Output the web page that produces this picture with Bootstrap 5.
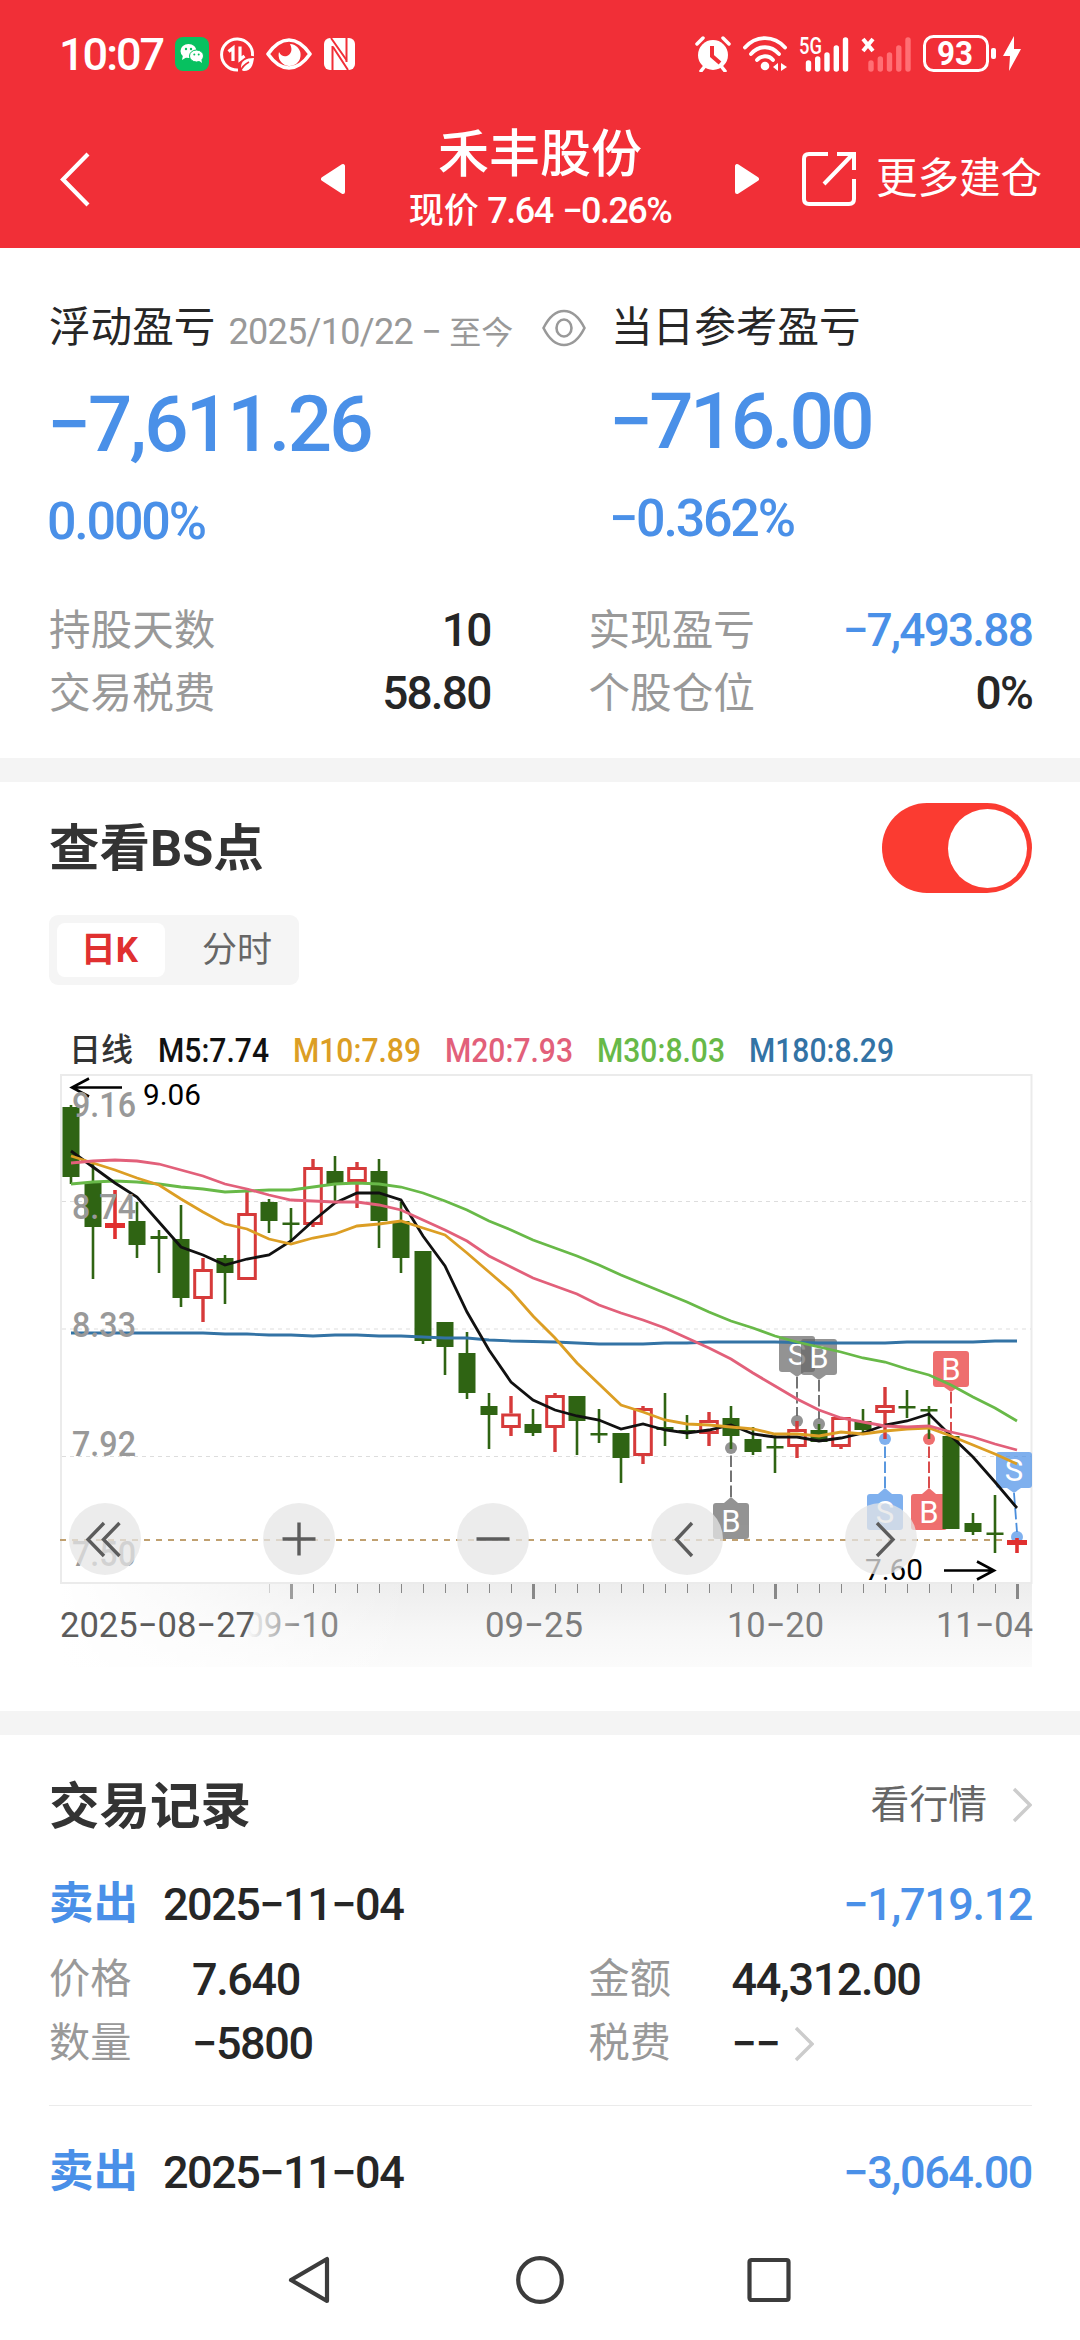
<!DOCTYPE html>
<html lang="zh-CN">
<head>
<meta charset="utf-8">
<meta name="viewport" content="width=device-width, initial-scale=1">
<title>禾丰股份</title>
<link href="https://cdn.jsdelivr.net/npm/bootstrap@5.3.0/dist/css/bootstrap.min.css" rel="stylesheet">
<style>
  :root { --brand: #f12f37; --fall: #4a90e8; --ink: #262626; --soft: #999; }
  body { width: 1080px; height: 2340px; overflow: hidden; background: #fff; color: var(--ink);
         font-family: Roboto, "Noto Sans CJK SC", sans-serif; line-height: 1; }
  svg { display: block; flex: none; }
  .app-head { background: var(--brand); height: 248px; color: #fff; }
  .status-bar { height: 108px; padding: 0 59px 0 59px; }
  .clock { font-size: 45px; font-weight: 500; letter-spacing: -2px; width: 116px; }
  .ic-data, .ic-eye { margin-left: 11px; }
  .ic-nfc, .ic-wifi, .ic-sig { margin-left: 12px; }
  .ic-batt { margin-left: 11px; }
  .title-bar { height: 140px; padding: 2px 36px 0 58px; }
  .prev-arrow { margin-left: 229px; }
  .stock-box { width: 390px; height: 140px; padding-top: 19px; }
  .stock-name { font-size: 51px; font-weight: 500; line-height: 54px; }
  .stock-quote { font-size: 35px; font-weight: 500; line-height: 58px; }
  .stock-quote span { font-size: 36px; letter-spacing: -1.5px; word-spacing: 2px; }
  .ic-out { margin-left: 42px; }
  .more-link { font-size: 41.5px; margin-left: 19px; }
  .fall { color: var(--fall); }
  .soft { color: var(--soft); }
  .pnl { padding: 41px 48px 0 49px; height: 510px; }
  .pnl-left { width: 562px; }
  .h-label { height: 76px; font-size: 41.6px; white-space: nowrap; padding-top: 2px; }
  .h-label .range { font-size: 36px; letter-spacing: -.7px; margin-left: 13px; margin-top: 7px; }
  .h-label .range i { font-style: normal; font-size: 32px; letter-spacing: 0; }
  .ic-show { margin-left: 29px; }
  .big { font-size: 78px; font-weight: 500; letter-spacing: -2.8px; height: 119px; }
  .pct { font-size: 52px; font-weight: 500; letter-spacing: -2.2px; height: 75px; }
  .big, .pct { text-indent: -2px; }
  .pnl-right .big { height: 113px; letter-spacing: -3.6px; }
  .pnl-right .pct { height: 81px; }
  .facts { margin-top: 40px; }
  .facts .fact { height: 63px; font-size: 41.6px; }
  .facts .col-6:first-child { padding-right: 50px; }
  .num { font-size: 46px; font-weight: 500; letter-spacing: -1.8px; }
  .facts .num { margin-top: -2px; }
  .band { height: 24px; background: #f4f4f4; }
  .bs { padding: 21px 48px 0 49px; height: 929px; }
  .sec-title { font-size: 50.5px; font-weight: 700; color: #333; padding-top: 3px; }
  .bs-switch { width: 150px; height: 90px; border-radius: 45px; background: #fb3b31; padding: 6px 5px; }
  .bs-knob { width: 79px; height: 79px; border-radius: 50%; background: #fff; }
  .tabs { width: 250px; height: 70px; border-radius: 9px; background: #f5f5f5; margin-top: 22px; padding: 8px; }
  .tabs div { font-size: 35px; color: #666; padding-top: 1px; }
  .tabs .on { width: 108px; border-radius: 8px; background: #fff; color: #e03030; font-weight: 700; padding-right: 3px; }
  .tabs .off { padding-left: 18px; }
  .chart { margin: 34px 0 0 -49px; }
  .trades { padding: 34px 48px 0 49px; height: 483px; }
  .t-head { height: 73px; }
  .more-quote { font-size: 38.8px; color: #666; }
  .ic-more { margin-left: 25px; }
  .ic-fee { margin-left: 15px; }
  .t-row1 { height: 104px; padding-top: 21px; }
  .side { font-size: 44.5px; font-weight: 700; width: 114px; }
  .t-row1 .num, .t-cells .num { font-size: 45px; letter-spacing: -1.4px; }
  .t-row1 .day { letter-spacing: -1.5px !important; }
  .t-cells { height: 64px; padding-top: 3px; }
  .t-cells .soft { font-size: 41.2px; width: 143px; }
  .t-line { height: 1px; background: #ebebeb; margin-top: 31px; margin-bottom: 4px; }
  .sys-nav { height: 122px; padding-left: 287px; padding-top: 2px; }
  .ic-home { margin-left: 185px; }
  .ic-recent { margin-left: 183px; }
</style>
</head>
<body>
<header class="app-head">
  <div class="status-bar d-flex align-items-center">
    <span class="clock">10:07</span>
    <svg width="34" height="34" viewBox="0 0 34 34"><rect width="34" height="34" rx="8" fill="#07c160"/><g fill="#fff"><ellipse cx="13.500" cy="14" rx="8" ry="7"/><path d="M8 18l-1 5 5-3z"/></g><g fill="#fff" stroke="#07c160"><ellipse cx="21.500" cy="19" rx="7" ry="6"/></g><path d="M23 23l4 3-1-5z" fill="#fff"/><g fill="#07c160"><circle cx="11" cy="12" r="1.200"/><circle cx="16" cy="12" r="1.200"/><circle cx="19.300" cy="17.500" r="1"/><circle cx="23.700" cy="17.500" r="1"/></g></svg>
    <svg class="ic-data" width="35" height="35" viewBox="0 0 35 35" fill="none" stroke="#fff" stroke-width="3"><path d="M32.500 19A15.500 15.500 0 1 0 18 33"/><path d="M8.500 14.500l4.500-3.500v13M20 9.500v13l4.500-3.500" stroke-width="3.200"/><path d="M34 21c-8 0-13 3-13 9 0 2 1 4 3 4 7 0 9-6 10-13z" fill="#fff" stroke="none"/><path d="M20 35c2-5 5-8 9-10" stroke="#f12f37" stroke-width="1.800"/></svg>
    <svg class="ic-eye" width="46" height="34" viewBox="0 0 46 34"><path d="M2 17C9 7 15 3 23 3s14 4 21 14c-7 10-13 14-21 14S9 27 2 17z" fill="none" stroke="#fff" stroke-width="3.600" stroke-linejoin="round"/><path d="M24 7a11 11 0 1 1-11 8c2 4 5 5 8 4 4-2 6-6 3-12z" fill="#fff"/></svg>
    <svg class="ic-nfc" width="31" height="34" viewBox="0 0 31 34"><rect y="1" width="31" height="32" rx="6" fill="#fff"/><path d="M8.500 9v24M22.500 1v24" stroke="#f12f37" stroke-width="2" fill="none"/><path d="M7 1l15.500 22M9 10l15 23" stroke="#f12f37" stroke-width="2" fill="none"/></svg>
    <svg class="ms-auto" width="36" height="36" viewBox="0 0 36 36"><circle cx="18" cy="19" r="15" fill="#fff"/><path d="M2 8l6-6M34 8l-6-6M6 35l4-5M30 35l-4-5" stroke="#fff" stroke-width="3.500" stroke-linecap="round"/><path d="M17 10v10l8 7" fill="none" stroke="#f12f37" stroke-width="4"/></svg>
    <svg class="ic-wifi" width="44" height="36" viewBox="0 0 44 36" fill="none" stroke="#fff" stroke-width="3.800" stroke-linecap="round"><path d="M2 11.500C13-1 31-1 42 11.500M8 18c8-9 20-9 28 0M14 24c4-5 12-5 16 0"/><circle cx="22" cy="30" r="4.300" fill="#fff" stroke="none"/><path d="M30 31l5-4v8zM44 31l-6-4v8z" fill="#fff" stroke="none"/></svg>
    <svg class="ic-sig" width="50" height="48" viewBox="0 -6 50 48"><text x="0" y="17.500" font-size="23" font-weight="500" fill="#fff" textLength="23" lengthAdjust="spacingAndGlyphs">5G</text><path d="M9.500 27v6M18.700 23v10M28 19v14M37.300 12v21M46.500 4v29" stroke="#fff" stroke-width="5.400" stroke-linecap="round"/></svg>
    <svg class="ic-sig" width="51" height="36" viewBox="0 0 51 36"><path d="M2 3l10 12M12 3L2 15" stroke="#fff" stroke-width="4"/><path d="M10 27v6M19.300 23v10M28.500 19v14M37.800 12v21M47 4v29" stroke="#ff6f74" stroke-width="5.400" stroke-linecap="round"/></svg>
    <svg class="ic-batt" width="98" height="38" viewBox="0 0 98 38"><rect x="1.500" y="1.500" width="63" height="34" rx="9" fill="none" stroke="#fff" stroke-width="3"/><text x="14" y="30" font-size="33" font-weight="700" fill="#fff" textLength="36" lengthAdjust="spacingAndGlyphs">93</text><rect x="68" y="13" width="5" height="11" rx="2" fill="#fff"/><path d="M91 1L80 21h7l-1 15 12-22h-7z" fill="#fff"/></svg>
  </div>
  <div class="title-bar d-flex align-items-center">
    <svg width="34" height="56" viewBox="0 0 34 56"><path d="M30 3L5 28.500 30 54" fill="none" stroke="#fff" stroke-width="4.200"/></svg>
    <svg class="prev-arrow" width="24" height="32" viewBox="0 0 24 32"><path d="M22 3v26L2 16z" fill="#fff" stroke="#fff" stroke-width="4" stroke-linejoin="round"/></svg>
    <div class="stock-box text-center">
      <div class="stock-name">禾丰股份</div>
      <div class="stock-quote">现价 <span>7.64 −0.26%</span></div>
    </div>
    <svg width="24" height="32" viewBox="0 0 24 32"><path d="M2 3v26l20-13z" fill="#fff" stroke="#fff" stroke-width="4" stroke-linejoin="round"/></svg>
    <svg class="ic-out" width="56" height="56" viewBox="0 0 56 56" fill="none" stroke="#fff" stroke-width="4"><path d="M27 3H8q-5 0-5 5v40q0 5 5 5h40q5 0 5-5V28M23 33L51 4M36 3h17v16"/></svg>
    <div class="more-link text-nowrap">更多建仓</div>
  </div>
</header>

<main>
<section class="pnl">
  <div class="d-flex">
    <div class="pnl-left flex-shrink-0">
      <div class="h-label d-flex align-items-center">浮动盈亏<span class="range soft">2025/10/22 − <i>至今</i></span>
        <svg class="ic-show" width="44" height="38" viewBox="0 0 44 38" fill="none" stroke="#999" stroke-width="2.600"><path d="M1.500 19C7 8 14 2 22 2s15 6 20.500 17C37 30 30 36 22 36S7 30 1.500 19z"/><ellipse cx="22" cy="19" rx="7.500" ry="8.500"/></svg>
      </div>
      <div class="big fall d-flex align-items-center">−7,611.26</div>
      <div class="pct fall d-flex align-items-center">0.000%</div>
    </div>
    <div class="pnl-right">
      <div class="h-label d-flex align-items-center">当日参考盈亏</div>
      <div class="big fall d-flex align-items-center">−716.00</div>
      <div class="pct fall d-flex align-items-center">−0.362%</div>
    </div>
  </div>
  <div class="facts row gx-0">
    <div class="col-6">
      <div class="fact d-flex justify-content-between align-items-center"><span class="soft">持股天数</span><span class="num">10</span></div>
      <div class="fact d-flex justify-content-between align-items-center"><span class="soft">交易税费</span><span class="num">58.80</span></div>
    </div>
    <div class="col-6 ps-5">
      <div class="fact d-flex justify-content-between align-items-center"><span class="soft">实现盈亏</span><span class="num fall">−7,493.88</span></div>
      <div class="fact d-flex justify-content-between align-items-center"><span class="soft">个股仓位</span><span class="num">0%</span></div>
    </div>
  </div>
</section>
<div class="band"></div>

<section class="bs">
  <div class="d-flex justify-content-between align-items-center">
    <div class="sec-title">查看BS点</div>
    <div class="bs-switch d-flex justify-content-end"><div class="bs-knob"></div></div>
  </div>
  <div class="tabs d-flex">
    <div class="on d-flex align-items-center justify-content-center">日K</div>
    <div class="off flex-grow-1 d-flex align-items-center justify-content-center">分时</div>
  </div>
  <svg class="chart" id="kline" width="1080" height="650" viewBox="0 1020 1080 650"></svg>
</section>
<div class="band"></div>

<section class="trades">
  <div class="t-head d-flex justify-content-between align-items-center">
    <div class="sec-title">交易记录</div>
    <div class="more-quote d-flex align-items-center">看行情
      <svg class="ic-more" width="20" height="36" viewBox="0 0 20 36"><path d="M2 2l16 16L2 34" fill="none" stroke="#ccc" stroke-width="3.400"/></svg>
    </div>
  </div>
  <div class="t-row1 d-flex align-items-center">
    <span class="side fall">卖出</span><span class="num day">2025−11−04</span><span class="num fall ms-auto">−1,719.12</span>
  </div>
  <div class="row gx-0">
    <div class="col-6">
      <div class="t-cells d-flex align-items-center"><span class="soft">价格</span><span class="num">7.640</span></div>
      <div class="t-cells d-flex align-items-center"><span class="soft">数量</span><span class="num">−5800</span></div>
    </div>
    <div class="col-6 ps-5">
      <div class="t-cells d-flex align-items-center"><span class="soft">金额</span><span class="num">44,312.00</span></div>
      <div class="t-cells d-flex align-items-center"><span class="soft">税费</span><span class="num">−−</span>
        <svg class="ic-fee" width="20" height="36" viewBox="0 0 20 36"><path d="M2 2l16 16L2 34" fill="none" stroke="#ccc" stroke-width="3.400"/></svg></div>
    </div>
  </div>
  <div class="t-line"></div>
  <div class="t-row1 d-flex align-items-center">
    <span class="side fall">卖出</span><span class="num day">2025−11−04</span><span class="num fall ms-auto">−3,064.00</span>
  </div>
</section>
</main>

<nav class="sys-nav d-flex align-items-center">
  <svg width="44" height="50" viewBox="0 0 44 50"><path d="M40 4v42L4 25z" fill="none" stroke="#3c3c3c" stroke-width="4.200" stroke-linejoin="round"/></svg>
  <svg class="ic-home" width="48" height="50" viewBox="0 0 48 50"><circle cx="24" cy="25" r="21.800" fill="none" stroke="#3c3c3c" stroke-width="4.200"/></svg>
  <svg class="ic-recent" width="44" height="46" viewBox="0 0 44 46"><rect x="2.500" y="3" width="39" height="40" rx="2" fill="none" stroke="#3c3c3c" stroke-width="4.200"/></svg>
</nav>

<script src="https://cdn.jsdelivr.net/npm/bootstrap@5.3.0/dist/js/bootstrap.bundle.min.js"></script>
<script>
  const X = i => 71 + 22 * i;
  const GREEN = '#2f6413', RED = '#d63a3a';
  let out = '';
  const add = s => { out += s; };
  const label = (s, x, base, size, width, color, extra = '') =>
    add(`<text x="${x}" y="${base}" font-size="${size}" textLength="${width}" lengthAdjust="spacingAndGlyphs" fill="${color}" ${extra}>${s}</text>`);

  // legend
  label('日线', 69, 1062, 32, 64, '#333', 'font-weight="500"');
  [['M5:7.74', 158, 111, '#111'], ['M10:7.89', 293, 128, '#dc9e24'], ['M20:7.93', 445, 128, '#e2607a'],
   ['M30:8.03', 597, 128, '#68b948'], ['M180:8.29', 749, 145, '#3373a5']]
    .forEach(([s, x, w, c]) => label(s, x, 1063, 33, w, c, 'font-weight="500"'));

  // frame, grid and the axis strip below it
  add(`<defs><linearGradient id="gv" x2="0" y2="1"><stop offset="0" stop-color="#ededed"/><stop offset=".6" stop-color="#f7f7f7"/><stop offset="1" stop-color="#fbfbfb"/></linearGradient>
       <linearGradient id="gh"><stop offset="0" stop-color="#fff"/><stop offset=".16" stop-color="#fff" stop-opacity=".6"/><stop offset=".36" stop-color="#fff" stop-opacity="0"/></linearGradient>
       <linearGradient id="fade" gradientUnits="userSpaceOnUse" x1="250" x2="300"><stop offset="0" stop-color="#888" stop-opacity=".05"/><stop offset="1" stop-color="#888"/></linearGradient></defs>
       <rect x="60" y="1585" width="972" height="83" fill="url(#gv)"/><rect x="60" y="1585" width="972" height="83" fill="url(#gh)"/>
       <rect x="61" y="1076" width="970.500" height="508" fill="none" stroke="#ebebeb" stroke-width="2"/>`);
  [1202.5, 1330, 1457.5].forEach(y => add(`<path d="M62 ${y}H1031" stroke="#ddd" stroke-width="1.200" stroke-dasharray="4 4"/>`));
  add('<path d="M60 1541H1002" stroke="#c0a070" stroke-width="2" stroke-dasharray="6 6"/>');

  // buy / sell flags: letter, box centre x, box top, dot x, dot y, points down?
  [['S', 797, 1337, 797, 1422, 1, '#666', '#666'], ['B', 819, 1340, 819, 1425, 1, '#666', '#666'],
   ['B', 731, 1504, 731, 1449, 0, '#666', '#666'], ['S', 885, 1495, 885, 1440, 0, '#4a90e8', '#4a8edc'],
   ['B', 929, 1495, 929, 1440, 0, '#e83232', '#d63a3a'], ['B', 951, 1352, 951, 1443, 1, '#e83232', '#d63a3a'],
   ['S', 1014, 1453, 1017, 1538, 1, '#4a90e8', '#4a8edc']].forEach(([t, cx, top, dx, dy, down, c, lc]) => {
    const y0 = down ? top + 41 : top - 6;
    const tip = down ? `M${cx - 7} ${top + 36}l7 5 7-5z` : `M${cx - 7} ${top}l7-6 7 6z`;
    add(`<g fill="${c}" opacity=".7"><rect x="${cx - 18}" y="${top}" width="36" height="36" rx="3"/><path d="${tip}"/><circle cx="${dx}" cy="${dy}" r="6"/></g>
         <path d="M${cx} ${y0}L${dx} ${down ? dy - 5 : dy + 5}" stroke="${lc}" stroke-width="1.800" stroke-dasharray="11.500 3.500"/>
         <text x="${cx}" y="${top + 29}" font-size="31" text-anchor="middle" fill="#fff">${t}</text>`);
  });

  // candles: kind, body top, body bottom, high, low
  const K = [['g',1108,1178,1106,1185],['g',1184,1228,1165,1280],['c',1224,1229,1191,1240],['g',1222,1246,1203,1259],
    ['g',1237,1240,1231,1274],['g',1240,1299,1206,1308],['r',1270,1300,1259,1323],['g',1259,1274,1256,1305],
    ['r',1214,1281,1189,1281],['g',1203,1222,1200,1234],['g',1223.5,1226,1209,1243],['r',1168,1226,1160,1228],
    ['g',1172,1185,1157,1203],['r',1168,1183,1163,1209],['g',1172,1222,1160,1249],['g',1222,1259,1203,1274],
    ['g',1252,1342,1252,1345],['g',1323,1348,1323,1376],['g',1354,1394,1333,1400],['g',1407,1416,1394,1450],
    ['r',1414.5,1429,1397,1437],['g',1425,1434,1410,1437],['r',1396,1429,1394,1453],['g',1397,1422,1397,1456],
    ['g',1434,1436.5,1410,1444],['g',1434,1459,1434,1484],['r',1409,1457,1407,1465],['g',1428,1431,1394,1447],
    ['g',1431,1433.5,1416,1440],['r',1421,1435,1413,1447],['g',1419,1437,1407,1450],['g',1440,1453,1428,1456],
    ['g',1447,1449.5,1436,1474],['r',1430,1448,1422,1459],['g',1431,1443,1425,1443],['r',1418,1448,1418,1450],
    ['g',1422,1431,1410,1436],['r',1406,1414,1388,1440],['g',1407,1409.5,1391,1419],['g',1410,1412.5,1407,1440],
    ['g',1437,1530,1437,1530],['g',1524,1533,1514,1536],['g',1533.5,1536,1496,1554],['c',1541,1546,1539,1554]];
  K.forEach(([k, t, b, h, l], i) => {
    const x = X(i);
    if (k === 'g') add(`<path d="M${x} ${h}V${l}" stroke="${GREEN}" stroke-width="2.600"/><rect x="${x - 8.5}" y="${t}" width="17" height="${b - t}" fill="${GREEN}"/>`);
    if (k === 'c') add(`<path d="M${x} ${h}V${l}" stroke="#e03030" stroke-width="3.600"/><rect x="${x - 10}" y="${t}" width="20" height="${b - t}" fill="#e03030"/>`);
    if (k === 'r') add(`<path d="M${x} ${h}V${t}M${x} ${b}V${l}" stroke="${RED}" stroke-width="3.400"/><rect x="${x - 8.3}" y="${t + 1.5}" width="16.600" height="${b - t - 3}" fill="none" stroke="${RED}" stroke-width="3"/>`);
  });

  // extreme-price pointers
  add('<path d="M122 1088.500H72M89 1079.500L72 1088.500 89 1097.500M944 1571.500H994M977 1562.500L994 1571.500 977 1580.500" fill="none" stroke="#000" stroke-width="2.600"/>');
  label('9.06', 143, 1105.5, 29, 58, '#000');
  label('7.60', 865, 1581, 29, 58, '#000');

  // moving averages
  const MA = {
    '#3373a5': [1334,1334,1334,1334,1334,1334,1334,1335,1335,1336,1336,1337,1336,1336,1337,1337,1338,1339,1339,1341,1342,1342.5,1343,1344,1345,1345,1345,1344,1344,1343,1343,1343,1343,1343.5,1344,1344,1344,1344,1343,1343,1343,1343,1342,1342],
    '#68b948': [1185,1183,1182,1183,1185,1188,1190,1193,1192,1191,1191,1188,1185,1184,1185,1188,1194,1202,1211,1222,1231,1241,1249,1257,1266,1276,1285,1294,1303,1313,1322,1329,1337,1343,1348,1353,1359,1363,1370,1376,1386,1398,1409,1422],
    '#111': [1152,1168,1184,1198,1223,1248,1256,1266,1260,1256,1242,1222,1204,1194,1194,1201,1237,1267,1313,1351,1383,1401,1411,1417,1421,1430,1425,1431,1434,1431,1426,1435,1438,1438,1442,1439,1434,1426,1422,1415,1437,1458,1483,1509],
    '#dc9e24': [1157,1164,1171,1179,1186,1200,1213,1225,1230,1240,1245,1239,1235,1227,1225,1222,1229,1236,1254,1273,1292,1317,1339,1364,1385,1406,1413,1421,1425,1426,1428,1430,1435,1435,1437,1433,1435,1432,1430,1429,1437,1446,1455,1465],
    '#e2607a': [1164,1162,1161,1162,1165,1171,1177,1185,1190,1196,1201,1202,1203,1203,1206,1211,1221,1231,1242,1257,1268,1279,1287,1295,1306,1314,1321,1329,1339,1349,1360,1374,1387,1400,1411,1419,1423,1427,1428,1427,1433,1438,1445,1451]
  };
  for (const [c, ys] of Object.entries(MA))
    add(`<polyline points="${ys.map((y, i) => X(i) + ',' + y).join(' ')}" fill="none" stroke="${c}" stroke-width="2.800"/>`);

  // price axis
  [['9.16', 1118], ['8.74', 1220], ['8.33', 1338], ['7.92', 1457], ['7.50', 1567]]
    .forEach(([s, y]) => label(s, 72, y, 35, 64, '#999', 'font-weight="500"'));

  // date axis
  for (let i = 9; i < 44; i++) {
    const major = (i - 10) % 11 === 0;
    add(`<path d="M${X(i) + .5} 1585v${major ? 15 : 9}" stroke="#888" stroke-width="${major ? 3 : 1}" opacity="${i === 9 ? .35 : i === 10 ? .8 : 1}"/>`);
  }
  label('2025−08−27', 60, 1638, 35, 195, '#5c5c5c');
  label('09−10', 245, 1638, 35, 94, 'url(#fade)');
  label('09−25', 485, 1638, 35, 98, '#7c7c7c');
  label('10−20', 727, 1638, 35, 97, '#7c7c7c');
  label('11−04', 936, 1638, 35, 97, '#7c7c7c');

  // round control buttons
  [[105, 'M104 1524L88 1540.500 104 1557M119.500 1524L103.500 1540.500 119.500 1557'], [299, 'M282.500 1540H315.500M299 1523.500V1556.500'],
   [493, 'M476.500 1540H509.500'], [687, 'M692 1524L676.500 1540.500 692 1557'], [881, 'M877 1524L893 1540.500 877 1557']]
    .forEach(([x, d]) => add(`<circle cx="${x}" cy="1540" r="36" fill="#e6e6e6" opacity=".75"/><path d="${d}" fill="none" stroke="#5c5c5c" stroke-width="3.400"/>`));

  document.getElementById('kline').innerHTML = out;
</script>
</body>
</html>
